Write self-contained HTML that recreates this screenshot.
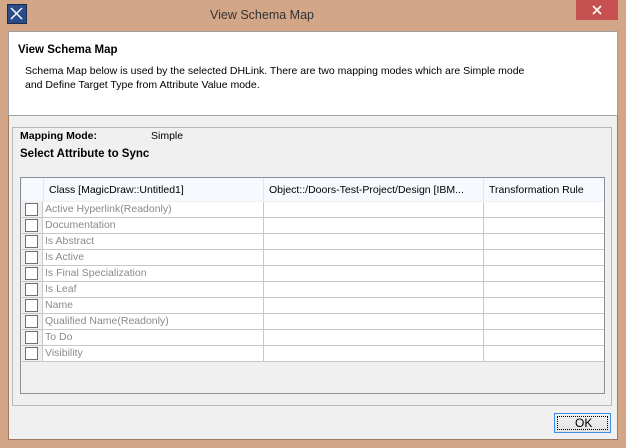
<html><head><style>
body{margin:0;width:626px;height:448px;background:#d3a688;position:relative;overflow:hidden;font-family:"Liberation Sans",sans-serif;font-size:11px;color:#000}
.a{position:absolute}
.t{position:absolute;white-space:nowrap}
.row{position:absolute;left:22px;width:582px;height:15px;border-bottom:1px solid #c8c8c8;background:#fff}
.cb{position:absolute;left:3px;top:1px;width:11px;height:11px;border:1px solid #707070;background:#fff}
.c0{position:absolute;left:0;top:0;width:20px;height:15px;background:#f0f0f0;border-right:1px solid #c8c8c8}
.v{position:absolute;top:0;height:15px;border-left:1px solid #c8c8c8}
.rl{position:absolute;left:23px;top:1px;color:#8a8a8a;font-size:10.5px}
</style></head><body>
<div class="a" style="left:7px;top:4px;width:18px;height:18px;background:#2a4d8a;border:1px solid #1a2a50"></div>
<svg class="a" style="left:8px;top:5px" width="17" height="17"><path d="M3 3 L14 14 M14 3 L6 11 M3 14 L8 9" stroke="#fff" stroke-width="1.5"/></svg>
<div class="t" style="left:210px;top:8px;font-size:12.5px;color:#333">View Schema Map</div>
<div class="a" style="left:576px;top:0;width:42px;height:20px;background:#c75050"></div>
<svg class="a" style="left:576px;top:0" width="42" height="20"><path d="M17 6 L25 14 M25 6 L17 14" stroke="#fff" stroke-width="1.6"/></svg>
<div class="a" style="left:8px;top:31px;width:610px;height:409px;background:#f0f0f0;border-left:1px solid #a07860;border-right:1px solid #a07860;border-bottom:1px solid #a07860;box-sizing:border-box"></div>
<div class="a" style="left:8px;top:31px;width:610px;height:85px;background:#fff;border:1px solid #a0a0a0;box-sizing:border-box"></div>
<div class="t" style="left:18px;top:44px;font-weight:bold;font-size:11.5px">View Schema Map</div>
<div class="t" style="left:25px;top:65px;font-size:10.5px">Schema Map below is used by the selected DHLink. There are two mapping modes which are Simple mode</div>
<div class="t" style="left:25px;top:79px;font-size:10.5px">and Define Target Type from Attribute Value mode.</div>
<div class="a" style="left:12px;top:127px;width:600px;height:279px;border:1px solid #b8b8b8;box-sizing:border-box"></div>
<div class="t" style="left:20px;top:130px;font-weight:bold;font-size:10.5px">Mapping Mode:</div>
<div class="t" style="left:151px;top:130px;font-size:10.5px">Simple</div>
<div class="t" style="left:20px;top:148px;font-weight:bold;font-size:11.5px">Select Attribute to Sync</div>
<div class="a" style="left:20px;top:177px;width:585px;height:217px;border:1px solid #8a8f99;box-sizing:border-box;background:#f0f0f0"></div>
<div class="a" style="left:22px;top:178px;width:582px;height:23px;background:#f6f9fd"></div>
<div class="a" style="left:43px;top:178px;width:1px;height:23px;background:#e3e8ef"></div>
<div class="a" style="left:263px;top:178px;width:1px;height:23px;background:#e3e8ef"></div>
<div class="a" style="left:483px;top:178px;width:1px;height:23px;background:#e3e8ef"></div>
<div class="t" style="left:49px;top:184px;font-size:10.5px">Class [MagicDraw::Untitled1]</div>
<div class="t" style="left:269px;top:184px;font-size:10.5px">Object::/Doors-Test-Project/Design [IBM...</div>
<div class="t" style="left:489px;top:184px;font-size:10.5px">Transformation Rule</div>
<div class="row" style="top:202px"><div class="c0"></div><div class="cb"></div><div class="v" style="left:241px"></div><div class="v" style="left:461px"></div><div class="rl">Active Hyperlink(Readonly)</div></div>
<div class="row" style="top:218px"><div class="c0"></div><div class="cb"></div><div class="v" style="left:241px"></div><div class="v" style="left:461px"></div><div class="rl">Documentation</div></div>
<div class="row" style="top:234px"><div class="c0"></div><div class="cb"></div><div class="v" style="left:241px"></div><div class="v" style="left:461px"></div><div class="rl">Is Abstract</div></div>
<div class="row" style="top:250px"><div class="c0"></div><div class="cb"></div><div class="v" style="left:241px"></div><div class="v" style="left:461px"></div><div class="rl">Is Active</div></div>
<div class="row" style="top:266px"><div class="c0"></div><div class="cb"></div><div class="v" style="left:241px"></div><div class="v" style="left:461px"></div><div class="rl">Is Final Specialization</div></div>
<div class="row" style="top:282px"><div class="c0"></div><div class="cb"></div><div class="v" style="left:241px"></div><div class="v" style="left:461px"></div><div class="rl">Is Leaf</div></div>
<div class="row" style="top:298px"><div class="c0"></div><div class="cb"></div><div class="v" style="left:241px"></div><div class="v" style="left:461px"></div><div class="rl">Name</div></div>
<div class="row" style="top:314px"><div class="c0"></div><div class="cb"></div><div class="v" style="left:241px"></div><div class="v" style="left:461px"></div><div class="rl">Qualified Name(Readonly)</div></div>
<div class="row" style="top:330px"><div class="c0"></div><div class="cb"></div><div class="v" style="left:241px"></div><div class="v" style="left:461px"></div><div class="rl">To Do</div></div>
<div class="row" style="top:346px"><div class="c0"></div><div class="cb"></div><div class="v" style="left:241px"></div><div class="v" style="left:461px"></div><div class="rl">Visibility</div></div>
<div class="a" style="left:554px;top:413px;width:57px;height:20px;border:1px solid #3c8ee8;box-sizing:border-box;background:linear-gradient(#f2f2f2,#e2e2e2)"><div style="position:absolute;left:2px;top:2px;right:2px;bottom:2px;border:1px dotted #000"></div></div>
<div class="t" style="left:575px;top:416px;font-size:12px">OK</div>
</body></html>
